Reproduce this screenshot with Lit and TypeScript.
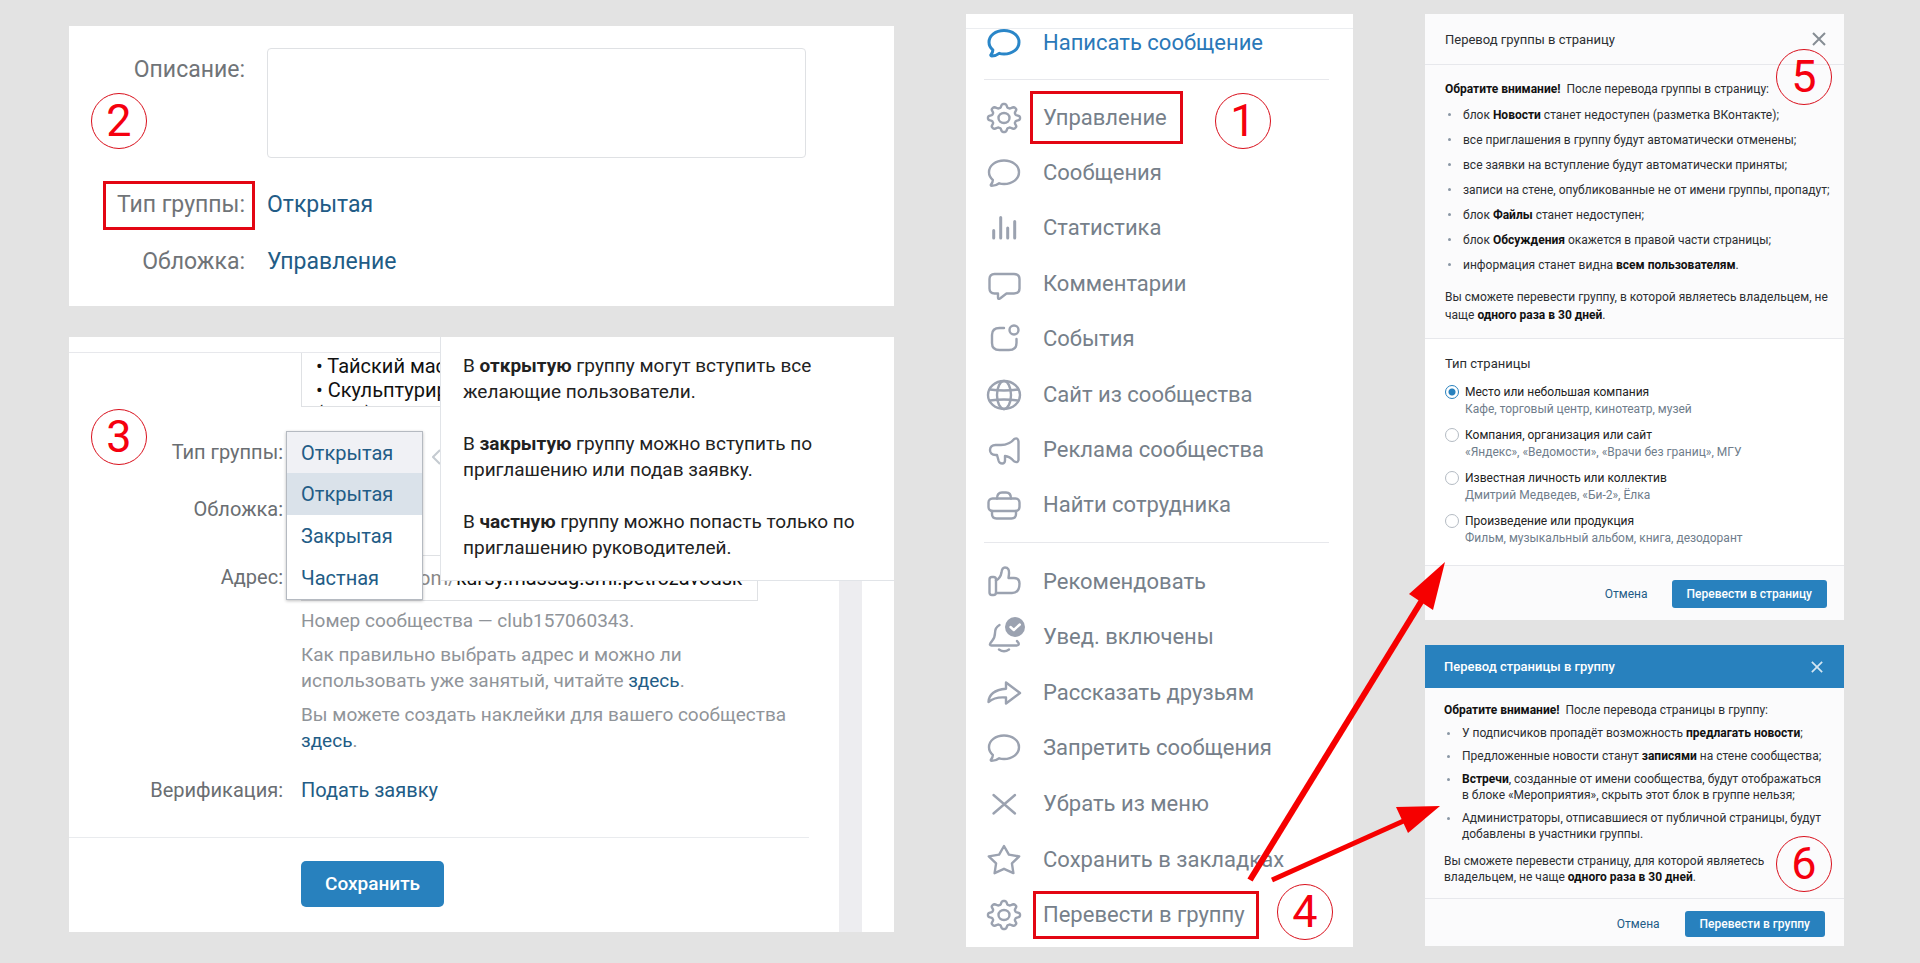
import { LitElement, html, svg, css } from "lit";
import { customElement } from "lit/decorators.js";

/* ---------- icon geometry (34 x 34 box) ---------- */

function gearPath(): string {
  const pts: string[] = [];
  for (let i = 0; i < 96; i++) {
    const t = (i / 96) * Math.PI * 2;
    const wave = Math.max(-1, Math.min(1, Math.cos(8 * t) * 1.5));
    const r = 0.88 + 0.12 * wave;
    pts.push(`${(17 + 16 * r * Math.sin(t)).toFixed(2)} ${(17 - 14 * r * Math.cos(t)).toFixed(2)}`);
  }
  return "M" + pts.join("L") + "Z";
}

function starPath(): string {
  const pts: string[] = [];
  for (let i = 0; i < 10; i++) {
    const t = (i / 10) * Math.PI * 2;
    const r = i % 2 ? 0.52 : 1;
    pts.push(`${(17 + 16 * r * Math.sin(t)).toFixed(2)} ${(18 - 15 * r * Math.cos(t)).toFixed(2)}`);
  }
  return "M" + pts.join("L") + "Z";
}

const bubble = svg`<path d="M17 4.5C25.5 4.5 32 9.5 32 16.2S25.5 28 17 28c-1.8 0-3.4-.2-4.8-.7-2 1.6-5 2.5-7.5 2.6-.9 0-1.2-.8-.6-1.5 1.2-1.5 1.9-3 1.7-4.6C3.4 21.8 2 19.2 2 16.2 2 9.5 8.5 4.5 17 4.5Z"/>`;
const gear = svg`<path d=${gearPath()}/><ellipse cx="17" cy="17" rx="5.5" ry="5"/>`;

const icons = {
  bubble,
  gear,
  stats: svg`<path stroke-width="3" d="M6.700 19.500V27M13.700 6.500V27M20.700 17V27M27.700 10.500V27"/>`,
  comment: svg`<path d="M7.500 7h19.500q5.500 0 5.500 5v9.500q0 5-5.500 5h-7.500l-6.500 5q-2 1.200-2-1v-4h-3.500q-5 0-5-5V12q0-5 5-5Z"/>`,
  events: svg`<path d="M17 6h-4.500q-7.500 0-7.500 7v8q0 7 7.500 7H22q7.500 0 7.500-7v-4"/><circle cx="27" cy="8" r="4.500"/>`,
  globe: svg`<ellipse cx="17" cy="17" rx="16" ry="14"/><ellipse cx="17" cy="17" rx="7" ry="14"/><path d="M3 11.500q14 2 28 0M3 22.500q14-2 28 0"/>`,
  ads: svg`<path d="M27.500 5.800C24.500 9.500 20 12 14 12H8.500C5 12 3 14.200 3 17s2 5 5.500 5H10l1.700 6q.8 2.500 3.500 2.500t2.800-3V23c4 .3 6.500 2.500 9 5.200q3.800 2.300 4.500-1.200V8.500q-.5-4.200-4-2.700Z"/>`,
  briefcase: svg`<rect x="1.500" y="10.500" width="31" height="12.500" rx="4"/><path d="M10 10.500q0-6 5-6h4q5 0 5 6M5 23v3q0 4.500 4.500 4.500h15q4.500 0 4.500-4.500v-3"/>`,
  like: svg`<rect x="2.500" y="12" width="6.500" height="18" rx="2.500"/><path d="M9 15.500q4.500-2.500 5.500-8Q15 2.500 18 2.500q4.500 0 4 6.500l-.5 4H27q5.500 0 5.500 5.500 0 9.500-7.500 9.500H9"/>`,
  bell: svg`<path d="M12.500 5Q8 7.500 8 13q0 4.500-3 8l-1.500 2q-1.500 2.500 1 2.500h25q3 0 2-2.500l-1.500-2M12 29.500q5 3.500 10 0"/><circle cx="28" cy="7" r="10" fill="currentColor" stroke="none"/><path stroke="#fff" d="m23.500 7 3.300 3 6-5.500"/>`,
  share: svg`<path d="M19 6.500 33 17 19 27.500v-6Q8 20.500 1.500 26 2 14.500 19 12.800Z"/>`,
  cross: svg`<path d="m6.500 8 21.500 18.500M28 8 6.500 26.500"/>`,
  star: svg`<path d=${starPath()}/>`,
};
type IconName = keyof typeof icons;

const primaryItems: [IconName, string][] = [
  ["gear", "Управление"],
  ["bubble", "Сообщения"],
  ["stats", "Статистика"],
  ["comment", "Комментарии"],
  ["events", "События"],
  ["globe", "Сайт из сообщества"],
  ["ads", "Реклама сообщества"],
  ["briefcase", "Найти сотрудника"],
];
const secondaryItems: [IconName, string][] = [
  ["like", "Рекомендовать"],
  ["bell", "Увед. включены"],
  ["share", "Рассказать друзьям"],
  ["bubble", "Запретить сообщения"],
  ["cross", "Убрать из меню"],
  ["star", "Сохранить в закладках"],
  ["gear", "Перевести в группу"],
];
const marks: Record<string, string> = {
  "Управление": "marked roomy",
  "Перевести в группу": "marked",
};

const shared = css`
  :host {
    display: block;
    position: relative;
    font-family: Roboto, "Liberation Sans", sans-serif;
  }
  * {
    box-sizing: border-box;
  }
  a {
    color: #225c86;
    text-decoration: none;
  }
  ul {
    list-style: none;
    margin: 0;
    padding: 0;
  }
  p {
    margin: 0;
  }
  button,
  input,
  select,
  textarea {
    font: inherit;
    margin: 0;
  }
  b {
    font-weight: 700;
  }
  .step {
    position: absolute;
    display: grid;
    place-items: center;
    width: 56px;
    height: 56px;
    border: 1px solid #d9101c;
    border-radius: 50%;
    color: #f5000f;
    font: 45px/54px Roboto, sans-serif;
  }
  .primary {
    border: 0;
    background: #2881be;
    color: #fff;
    font-weight: 500;
  }
`;

/* ---------- group settings, short form ---------- */

@customElement("group-summary")
class GroupSummary extends LitElement {
  static styles = [
    shared,
    css`
      :host {
        background: #fff;
        padding: 22px 88px 30px 0;
        font-size: 23px;
        line-height: 28px;
      }
      .form {
        display: grid;
        grid-template-columns: 176px minmax(0, 1fr);
        column-gap: 22px;
        row-gap: 29px;
      }
      .label {
        justify-self: end;
        color: #707478;
      }
      .top {
        padding-top: 8px;
      }
      textarea {
        display: block;
        width: 100%;
        height: 110px;
        margin-bottom: 4px;
        border: 1px solid #dfe1e4;
        border-radius: 4px;
        resize: none;
      }
      .marked {
        position: relative;
      }
      .marked::after {
        content: "";
        position: absolute;
        inset: -10px -10px -11px -14px;
        border: 3px solid #e30613;
      }
      .step {
        left: 22px;
        top: 67px;
      }
      a {
        justify-self: start;
      }
    `,
  ];
  render() {
    return html`
      <div class="form">
        <label class="label top" for="about">Описание:</label>
        <textarea id="about"></textarea>
        <span class="label marked">Тип группы:</span>
        <a href="#type">Открытая</a>
        <span class="label">Обложка:</span>
        <a href="#cover">Управление</a>
      </div>
      <span class="step">2</span>
    `;
  }
}

/* ---------- group settings, expanded form ---------- */

@customElement("group-settings")
class GroupSettings extends LitElement {
  static styles = [
    shared,
    css`
      :host {
        background: #fff;
        font-size: 20px;
        line-height: 26px;
        padding-top: 15px;
      }
      .body {
        border-top: 1px solid #e7e8ec;
        margin-right: 32px;
        border-right: 23px solid #ededf0;
        padding-bottom: 25px;
      }
      .form {
        display: grid;
        grid-template-columns: 214px minmax(0, 457px);
        column-gap: 18px;
      }
      .label {
        justify-self: end;
        color: #6a6e72;
      }
      textarea {
        display: block;
        width: 100%;
        height: 54px;
        border: 1px solid #dfe1e4;
        border-top: 0;
        padding: 1px 14px 0;
        line-height: 24px;
        color: #111;
        overflow: hidden;
        resize: none;
      }
      .type {
        padding-top: 32px;
      }
      .cover {
        padding-top: 31px;
      }
      .addr {
        padding-top: 42px;
      }
      .address {
        display: flex;
        align-items: center;
        height: 46px;
        margin-top: 33px;
        border: 1px solid #dfe1e4;
        padding: 0 14px 0 117px;
        color: #888;
      }
      .address input {
        flex: 1;
        min-width: 0;
        border: 0;
        padding: 0;
        color: #111;
        background: none;
      }
      .hints {
        grid-column: 2;
        margin: 7px -40px 0 0;
        display: grid;
        row-gap: 8px;
        font-size: 19px;
        color: #909499;
      }
      .verify {
        padding-top: 23px;
      }
      .actions {
        margin: 34px 30px 0 0;
        border-top: 1px solid #e9ebee;
        padding: 23px 0 0 232px;
      }
      .primary {
        height: 46px;
        padding: 0 24px;
        border-radius: 5px;
        font-size: 19px;
      }
      .holder {
        position: relative;
      }
      .menu {
        position: absolute;
        z-index: 1;
        left: -15px;
        top: 24px;
        width: 137px;
        border: 1px solid #b5bac1;
        background: #fff;
        box-shadow: 0 1px 3px rgba(0, 0, 0, 0.25);
        color: #225c86;
        line-height: 42px;
      }
      .menu select {
        display: block;
        width: 100%;
        height: 41px;
        appearance: none;
        border: 0;
        background: #f0f1f5;
        color: inherit;
        padding: 0 14px;
      }
      .menu li {
        padding: 0 14px;
      }
      .menu .on {
        background: #dae2ea;
      }
      .tip {
        position: absolute;
        right: 0;
        top: 0;
        width: 454px;
        padding: 16px 12px 19px 22px;
        border-left: 1px solid #e1e4e8;
        border-bottom: 1px solid #e1e4e8;
        background: #fff;
        color: #222;
        display: grid;
        row-gap: 26px;
        font-size: 19px;
      }
      .notch {
        position: absolute;
        left: -9px;
        top: 112px;
        width: 8px;
        height: 16px;
        fill: #fff;
        stroke: #c5cbd1;
        stroke-width: 2;
      }
      .step {
        left: 22px;
        top: 72px;
      }
    `,
  ];
  render() {
    return html`
      <div class="body">
        <div class="form">
          <label class="label" for="text" aria-label="Описание"></label>
          <textarea id="text" .value=${"• Тайский массаж\n• Скульптурирующий\n(тело)"}></textarea>
          <label class="label type" for="kind">Тип группы:</label>
          <div class="holder">
            <div class="menu">
              <select id="kind">
                <option>Открытая</option>
                <option>Закрытая</option>
                <option>Частная</option>
              </select>
              <ul>
                <li class="on">Открытая</li>
                <li>Закрытая</li>
                <li>Частная</li>
              </ul>
            </div>
          </div>
          <span class="label cover">Обложка:</span>
          <span></span>
          <label class="label addr" for="addr">Адрес:</label>
          <div class="address">
            <span>om/</span>
            <input id="addr" value="kursy.massag.smi.petrozavodsk" />
          </div>
          <div class="hints">
            <p>Номер сообщества — club157060343.</p>
            <p>
              Как правильно выбрать адрес и можно ли<br />использовать уже занятый, читайте
              <a href="#help">здесь</a>.
            </p>
            <p>Вы можете создать наклейки для вашего сообщества<br /><a href="#stickers">здесь</a>.</p>
          </div>
          <span class="label verify">Верификация:</span>
          <a class="verify" href="#verify">Подать заявку</a>
        </div>
        <div class="actions"><button class="primary">Сохранить</button></div>
      </div>
      <div class="tip">
        <svg class="notch" viewBox="0 0 8 16"><path d="M8 1 1 8l7 7" /></svg>
        <p>В <b>открытую</b> группу могут вступить все<br />желающие пользователи.</p>
        <p>В <b>закрытую</b> группу можно вступить по<br />приглашению или подав заявку.</p>
        <p>В <b>частную</b> группу можно попасть только по<br />приглашению руководителей.</p>
      </div>
      <span class="step">3</span>
    `;
  }
}

/* ---------- community side menu ---------- */

@customElement("community-menu")
class CommunityMenu extends LitElement {
  static styles = [
    shared,
    css`
      :host {
        background: #fff;
        padding-top: 14px;
        font-size: 22px;
        line-height: 28px;
      }
      nav {
        border-top: 1px solid #ebedf0;
        padding: 0 24px 4px 18px;
      }
      ul {
        display: grid;
        grid-auto-rows: 1fr;
      }
      li {
        display: grid;
        align-items: center;
      }
      .write {
        padding-bottom: 22px;
      }
      .main {
        min-height: 464px;
        border: solid #e7e8ec;
        border-width: 1px 0;
        padding: 10px 0 9px;
      }
      .more {
        min-height: 400px;
        padding-top: 11px;
      }
      a {
        display: flex;
        align-items: center;
        gap: 22px;
        padding-left: 3px;
        color: #76808a;
        white-space: nowrap;
      }
      .write a {
        color: #2a78b8;
      }
      svg {
        flex: none;
        width: 34px;
        height: 34px;
        margin: -3px 0;
        overflow: visible;
        fill: none;
        stroke: currentColor;
        stroke-width: 2.4px;
        stroke-linecap: round;
        stroke-linejoin: round;
        color: #9ba2b0;
      }
      .write svg {
        color: #2a86c8;
        stroke-width: 3px;
      }
      .marked {
        position: relative;
      }
      .marked::after {
        content: "";
        position: absolute;
        inset: -10px -14px -10px -10px;
        border: 3px solid #e30613;
      }
      .roomy::after {
        inset: -13px -16px -12px -13px;
      }
      .first {
        left: 249px;
        top: 79px;
      }
      .last {
        left: 311px;
        bottom: 7px;
      }
    `,
  ];
  private item([icon, text]: [IconName, string]) {
    return html`<a href="#menu"
      ><svg viewBox="0 0 34 34" aria-hidden="true">${icons[icon]}</svg
      ><span class=${marks[text] ?? ""}>${text}</span></a
    >`;
  }
  render() {
    return html`
      <nav>
        <div class="write">${this.item(["bubble", "Написать сообщение"])}</div>
        <ul class="main">
          ${primaryItems.map((i) => html`<li>${this.item(i)}</li>`)}
        </ul>
        <ul class="more">
          ${secondaryItems.map((i) => html`<li>${this.item(i)}</li>`)}
        </ul>
      </nav>
      <span class="step first">1</span>
      <span class="step last">4</span>
    `;
  }
}

/* ---------- dialogs ---------- */

const dialogStyles = css`
  :host {
    background: #fbfbfc;
    color: #2b2e31;
  }
  header {
    display: flex;
    align-items: center;
    justify-content: space-between;
    font-size: 13px;
  }
  .close {
    display: grid;
    border: 0;
    padding: 0;
    background: none;
  }
  .close svg {
    width: 14px;
    height: 14px;
    fill: none;
    stroke: #868d94;
    stroke-width: 2;
  }
  .text {
    font-size: 12px;
  }
  .text b {
    color: #111;
  }
  .text li {
    position: relative;
    padding-left: 18px;
  }
  .text li::before {
    content: "";
    position: absolute;
    left: 3px;
    top: 7px;
    width: 3px;
    height: 3px;
    border-radius: 50%;
    background: #8a97a5;
  }
  footer {
    display: flex;
    align-items: center;
    justify-content: flex-end;
    border-top: 1px solid #e7e8ec;
    font-size: 12px;
  }
  .cancel {
    border: 0;
    background: none;
    padding: 0;
    color: #225c86;
  }
  .primary {
    border-radius: 3px;
    padding: 0 15px;
  }
`;
const closeIcon = html`<svg viewBox="0 0 14 14" aria-hidden="true"><path d="m1 1 12 12M13 1 1 13" /></svg>`;

const pageTypes = [
  ["Место или небольшая компания", "Кафе, торговый центр, кинотеатр, музей"],
  ["Компания, организация или сайт", "«Яндекс», «Ведомости», «Врачи без границ», МГУ"],
  ["Известная личность или коллектив", "Дмитрий Медведев, «Би-2», Ёлка"],
  ["Произведение или продукция", "Фильм, музыкальный альбом, книга, дезодорант"],
];

@customElement("group-to-page")
class GroupToPage extends LitElement {
  static styles = [
    shared,
    dialogStyles,
    css`
      header {
        padding: 0 18px 0 20px;
        height: 51px;
        border-bottom: 1px solid #e7e8ec;
      }
      .text {
        padding: 15px 10px 14px 20px;
        line-height: 18px;
      }
      .text ul {
        display: grid;
        row-gap: 7px;
        padding: 8px 0 14px;
      }
      fieldset {
        margin: 0;
        border: 0;
        border-top: 1px solid #e7e8ec;
        padding: 16px 20px 18px;
        background: #fff;
        display: grid;
        row-gap: 9px;
      }
      legend {
        float: left;
        padding: 0;
        font-size: 13px;
        line-height: 18px;
        margin-bottom: 2px;
      }
      .option {
        display: grid;
        grid-template-columns: 14px 1fr;
        column-gap: 6px;
        font-size: 12px;
        line-height: 17px;
        color: #222;
      }
      .option input {
        appearance: none;
        width: 14px;
        height: 14px;
        margin-top: 1px;
        border: 1px solid #b4bbc3;
        border-radius: 50%;
        background: #fff;
      }
      .option input:checked {
        border-color: #2881be;
        background: radial-gradient(circle, #2881be 3px, #fff 4px);
      }
      .option small {
        grid-column: 2;
        font-size: 12px;
        color: #6f7d8b;
      }
      footer {
        gap: 24px;
        padding: 14px 17px 12px;
      }
      .primary {
        height: 28px;
      }
      .step {
        right: 12px;
        top: 35px;
      }
    `,
  ];
  render() {
    return html`
      <header>
        <span>Перевод группы в страницу</span>
        <button class="close" aria-label="Закрыть">${closeIcon}</button>
      </header>
      <div class="text">
        <p><b>Обратите внимание!</b>&nbsp; После перевода группы в страницу:</p>
        <ul>
          <li>блок <b>Новости</b> станет недоступен (разметка ВКонтакте);</li>
          <li>все приглашения в группу будут автоматически отменены;</li>
          <li>все заявки на вступление будут автоматически приняты;</li>
          <li>записи на стене, опубликованные не от имени группы, пропадут;</li>
          <li>блок <b>Файлы</b> станет недоступен;</li>
          <li>блок <b>Обсуждения</b> окажется в правой части страницы;</li>
          <li>информация станет видна <b>всем пользователям</b>.</li>
        </ul>
        <p>
          Вы сможете перевести группу, в которой являетесь владельцем, не<br />чаще
          <b>одного раза в 30 дней</b>.
        </p>
      </div>
      <fieldset>
        <legend>Тип страницы</legend>
        ${pageTypes.map(
          ([name, note], i) => html`<label class="option"
            ><input type="radio" name="page-type" ?checked=${i === 0} /><span>${name}</span><small>${note}</small></label
          >`
        )}
      </fieldset>
      <footer>
        <button class="cancel">Отмена</button>
        <button class="primary">Перевести в страницу</button>
      </footer>
      <span class="step">5</span>
    `;
  }
}

@customElement("page-to-group")
class PageToGroup extends LitElement {
  static styles = [
    shared,
    dialogStyles,
    css`
      header {
        padding: 0 21px 0 19px;
        height: 43px;
        background: #2881be;
        color: #fff;
        font-weight: 500;
      }
      .close svg {
        width: 12px;
        height: 12px;
        stroke: #d4e6f2;
      }
      .text {
        padding: 14px 10px 13px 19px;
        line-height: 16px;
      }
      .text ul {
        display: grid;
        row-gap: 7px;
        padding: 7px 0 11px;
      }
      footer {
        gap: 25px;
        padding: 12px 19px 9px;
      }
      .primary {
        height: 26px;
      }
      .step {
        right: 12px;
        bottom: 54px;
      }
    `,
  ];
  render() {
    return html`
      <header>
        <span>Перевод страницы в группу</span>
        <button class="close" aria-label="Закрыть">${closeIcon}</button>
      </header>
      <div class="text">
        <p><b>Обратите внимание!</b>&nbsp; После перевода страницы в группу:</p>
        <ul>
          <li>У подписчиков пропадёт возможность <b>предлагать новости</b>;</li>
          <li>Предложенные новости станут <b>записями</b> на стене сообщества;</li>
          <li><b>Встречи</b>, созданные от имени сообщества, будут отображаться<br />в блоке «Мероприятия», скрыть этот блок в группе нельзя;</li>
          <li>Администраторы, отписавшиеся от публичной страницы, будут<br />добавлены в участники группы.</li>
        </ul>
        <p>
          Вы сможете перевести страницу, для которой являетесь<br />владельцем, не чаще
          <b>одного раза в 30 дней</b>.
        </p>
      </div>
      <footer>
        <button class="cancel">Отмена</button>
        <button class="primary">Перевести в группу</button>
      </footer>
      <span class="step">6</span>
    `;
  }
}

/* ---------- page ---------- */

@customElement("app-root")
class AppRoot extends LitElement {
  static styles = css`
    :host {
      display: block;
      position: relative;
      min-height: 100vh;
      background: #e3e3e3;
    }
    .board {
      display: grid;
      grid-template-columns: minmax(0, 825fr) minmax(0, 387fr) minmax(0, 419fr);
      column-gap: 72px;
      align-items: start;
      padding: 14px 76px 16px 69px;
    }
    .left {
      display: grid;
      row-gap: 31px;
      padding-top: 12px;
    }
    .right {
      display: grid;
      row-gap: 25px;
    }
    .arrows {
      position: absolute;
      left: 0;
      top: 0;
      width: 1920px;
      height: 963px;
      pointer-events: none;
      fill: #f60000;
      stroke: #f60000;
    }
  `;
  render() {
    return html`
      <main class="board">
        <div class="left">
          <group-summary></group-summary>
          <group-settings></group-settings>
        </div>
        <community-menu></community-menu>
        <div class="right">
          <group-to-page></group-to-page>
          <page-to-group></page-to-group>
        </div>
      </main>
      <svg class="arrows" viewBox="0 0 1920 963" aria-hidden="true">
        <path fill="none" stroke-width="6" d="M1250 880 1424 597" />
        <path stroke="none" d="M1445 562 1433 610 1409 594Z" />
        <path fill="none" stroke-width="5" d="M1272 880 1408 819" />
        <path stroke="none" d="M1440 806 1408 833 1396 807Z" />
      </svg>
    `;
  }
}
